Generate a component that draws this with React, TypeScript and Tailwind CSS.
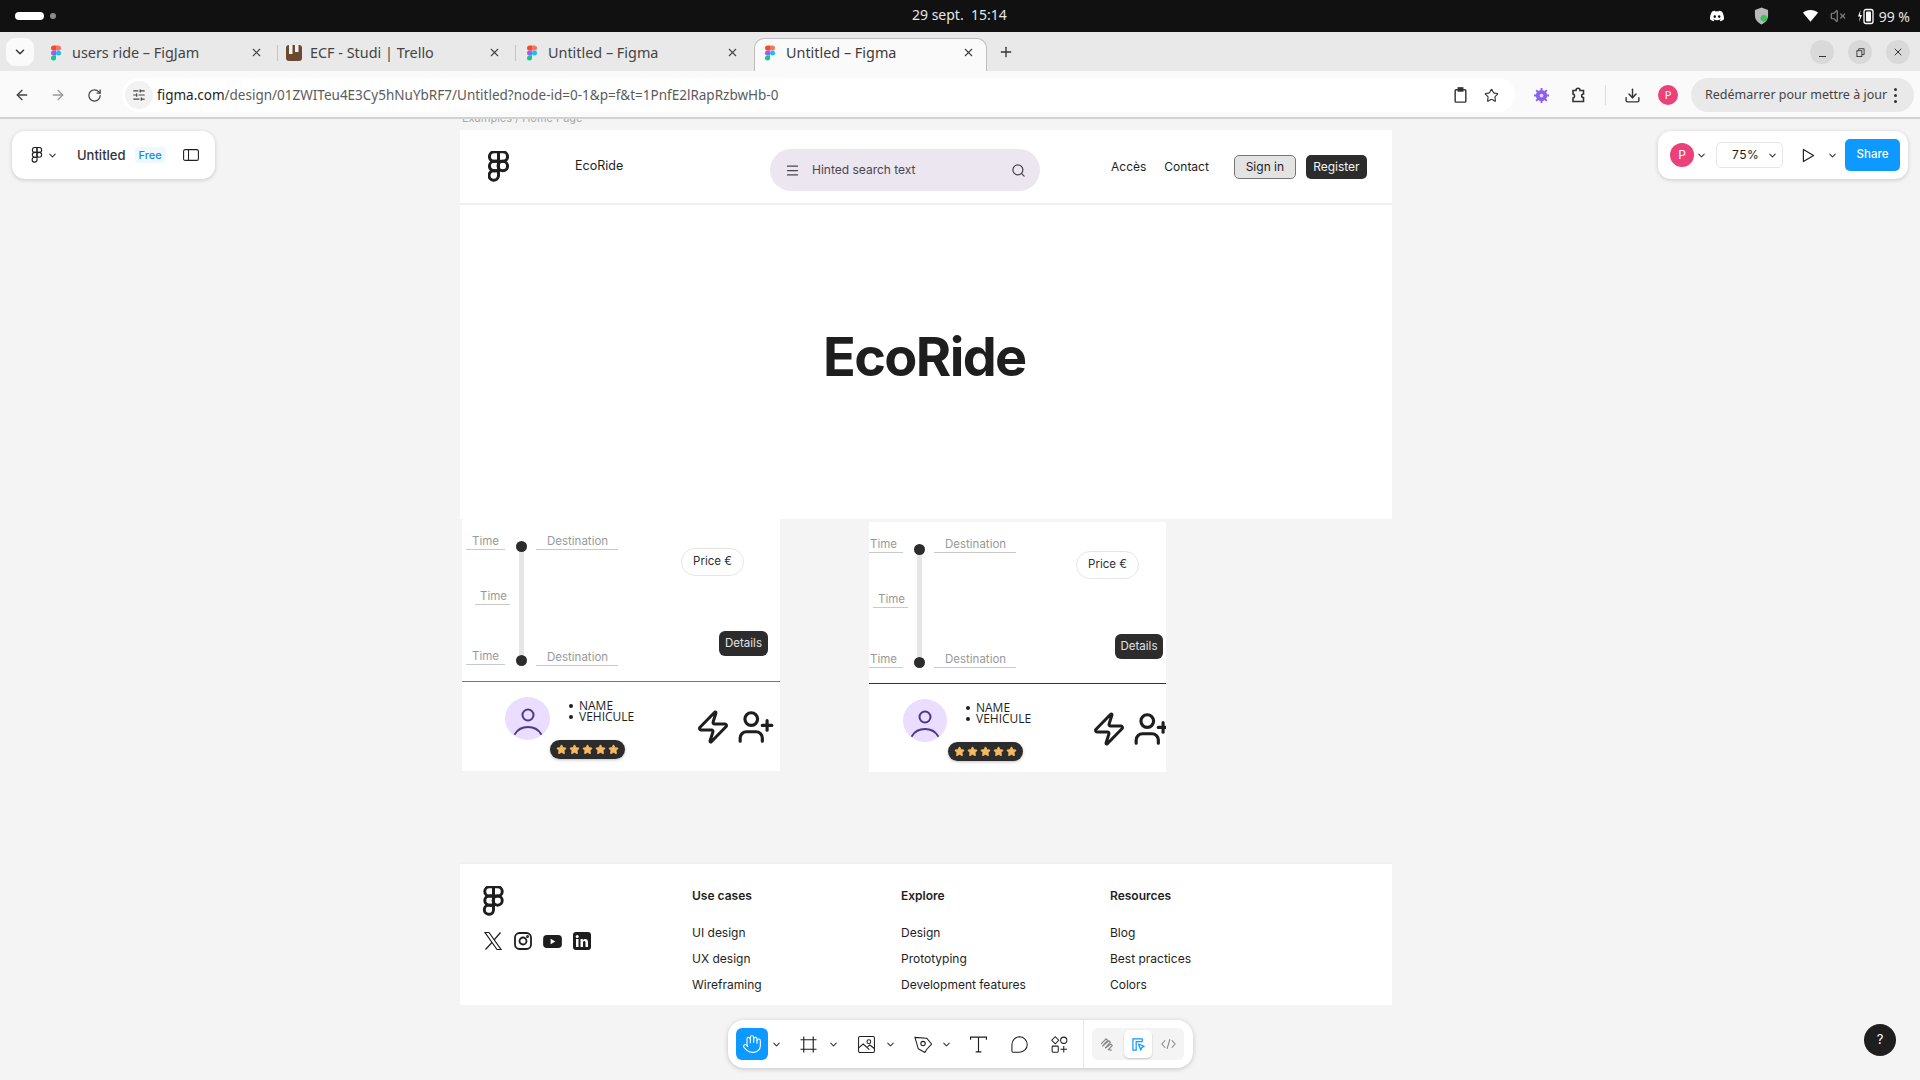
import { ArrowLeft, ArrowRight, ChevronDown, Download, Hand, Menu, Plus, RotateCw, Search, SlidersHorizontal, Star, UserPlus, VolumeX, X, Zap } from 'lucide-react'

const chromeFont = "font-['Noto_Sans',sans-serif]"

function FigmaLogo({ className, stroke = 3 }: { className: string; stroke?: number }) {
  return (
    <svg viewBox="0 0 24 36" fill="none" stroke="currentColor" strokeWidth={stroke} className={className}>
      <path d="M12 1H7a5.5 5.5 0 0 0 0 11h5z" />
      <path d="M12 1h5a5.5 5.5 0 0 1 0 11h-5z" />
      <path d="M12 12H7a5.5 5.5 0 0 0 0 11h5z" />
      <circle cx="17" cy="17.5" r="5.5" />
      <path d="M7 23h5v6a5.5 5.5 0 1 1-5-6z" />
    </svg>
  )
}

function FigmaFavicon() {
  return (
    <svg viewBox="0 0 24 36" className="w-[10px] h-[16px] shrink-0">
      <path d="M12 0H6a6 6 0 0 0 0 12h6z" fill="#f24e1e" />
      <path d="M12 0h6a6 6 0 0 1 0 12h-6z" fill="#ff7262" />
      <path d="M12 12H6a6 6 0 0 0 0 12h6z" fill="#a259ff" />
      <circle cx="18" cy="18" r="6" fill="#1abcfe" />
      <path d="M6 24h6v6a6 6 0 1 1-6-6z" fill="#0acf83" />
    </svg>
  )
}

function TrelloFavicon() {
  return (
    <svg viewBox="0 0 16 16" className="w-[16px] h-[16px] shrink-0">
      <rect x="0" y="0" width="16" height="16" rx="3" fill="#6b4a32" />
      <rect x="3" y="0" width="3.5" height="9" fill="#f2f2f2" />
      <rect x="9" y="0" width="3.5" height="7" fill="#f2f2f2" />
    </svg>
  )
}

function Tab({ title, active, icon }: { title: string; active?: boolean; icon: React.ReactNode }) {
  return (
    <div className={active ? 'w-[233px] h-[33px] flex items-center pl-[7px] pr-[11px] pb-[5px] gap-[8px] bg-[#fafafa] border border-b-0 border-[#bdbdbd] rounded-t-[10px] text-[#3c3c3c]' : 'w-[238px] h-[33px] flex items-center pl-[8px] pr-[15px] pb-[4px] gap-[8px] text-[#444]'}>
      <span className="w-[16px] flex justify-center">{icon}</span>
      <span className="flex-1 text-[14.4px] truncate">{title}</span>
      <X size={13} strokeWidth={2} />
    </div>
  )
}

function TopBar() {
  return (
    <div className={`${chromeFont} h-[32px] bg-[#111111] flex items-center justify-between pl-[15px] pr-[10px] relative`}>
      <div className="flex items-center gap-[6px]">
        <div className="w-[29px] h-[8px] rounded-full bg-white" />
        <div className="w-[6px] h-[6px] rounded-full bg-[#8a8a8a]" />
      </div>
      <div className="absolute left-[912px] top-[4px] leading-[22px] text-[14px] text-[#e6e6e6] whitespace-pre">29 sept.  15:14</div>
      <div className="flex items-center text-white">
        <svg viewBox="0 0 24 24" className="w-[16px] h-[16px]" fill="currentColor">
          <path d="M19.3 5.3A17 17 0 0 0 15 4l-.6 1.2a16 16 0 0 0-4.8 0L9 4a17 17 0 0 0-4.3 1.3C2 9.4 1.2 13.400 1.600 17.300A17 17 0 0 0 6.800 20l1.100-1.800-1.700-.9.400-.3a12 12 0 0 0 10.800 0l.4.300-1.700.9 1.100 1.800a17 17 0 0 0 5.200-2.700c.5-4.500-.8-8.500-3.100-12zM8.700 14.900c-1 0-1.900-1-1.900-2.100s.8-2.100 1.900-2.100 1.900 1 1.900 2.100-.8 2.100-1.900 2.100zm6.600 0c-1 0-1.900-1-1.900-2.100s.8-2.100 1.900-2.100 1.900 1 1.900 2.100-.8 2.100-1.900 2.100z" />
        </svg>
        <svg viewBox="0 0 16 18" className="w-[15px] h-[18px] ml-[29px]">
          <path d="M8 0l7 2.500v6c0 4.500-3 7.500-7 9.500-4-2-7-5-7-9.500v-6z" fill="#b8b8b8" />
          <circle cx="10.500" cy="11.500" r="3.500" fill="#3ac35a" />
        </svg>
        <svg viewBox="0 0 16 14" className="w-[15px] h-[14px] ml-[34px]" fill="currentColor">
          <path d="M8 13L0 3.500C2 1.500 5 .5 8 .5s6 1 8 3z" />
        </svg>
        <VolumeX size={16} className="ml-[12px] text-[#777]" />
        <svg viewBox="0 0 18 18" className="w-[18px] h-[18px] ml-[11px]" fill="none">
          <path d="M3.500 3L1 9.500h2L2 15l3-7H3z" fill="white" />
          <rect x="7" y="2.500" width="9" height="14" rx="2" stroke="white" strokeWidth="1.300" />
          <rect x="9" y="4.500" width="5" height="10" rx="1" fill="white" />
        </svg>
        <span className="ml-[4px] text-[14px] text-[#e6e6e6] whitespace-nowrap">99 %</span>
      </div>
    </div>
  )
}

function TabStrip() {
  return (
    <div className={`${chromeFont} h-[39px] bg-[#e9e9e9] flex items-end pl-[6px]`}>
      <div className="w-[28px] h-[28px] mb-[5px] mr-[6px] rounded-[9px] bg-[#fafafa] flex items-center justify-center">
        <ChevronDown size={14} strokeWidth={2.5} className="text-[#333]" />
      </div>
      <Tab title="users ride – FigJam" icon={<FigmaFavicon />} />
      <div className="w-px h-[16px] bg-[#c4c4c4] mb-[10px] -ml-px" />
      <Tab title="ECF - Studi | Trello" icon={<TrelloFavicon />} />
      <div className="w-px h-[16px] bg-[#c4c4c4] mb-[10px] -ml-px" />
      <Tab title="Untitled – Figma" icon={<FigmaFavicon />} />
      <Tab title="Untitled – Figma" active icon={<FigmaFavicon />} />
      <Plus size={16} strokeWidth={2} className="ml-[11px] mb-[11px] text-[#333]" />
      <div className="ml-auto mr-[10px] mb-[7px] flex gap-[14px] text-[#333]">
        <div className="w-[24px] h-[24px] rounded-full bg-[#d9d9d9] flex items-end justify-center pb-[7px]">
          <div className="w-[7px] h-px bg-[#333]" />
        </div>
        <div className="w-[24px] h-[24px] rounded-full bg-[#d9d9d9] flex items-center justify-center">
          <svg viewBox="0 0 10 10" className="w-[9px] h-[9px]" fill="none" stroke="#333">
            <rect x="1" y="3" width="5.500" height="6.500" />
            <path d="M3 3V.8h6v6.500H6.500" />
          </svg>
        </div>
        <div className="w-[24px] h-[24px] rounded-full bg-[#d9d9d9] flex items-center justify-center">
          <X size={12} strokeWidth={2} />
        </div>
      </div>
    </div>
  )
}

function AddressBar() {
  return (
    <div className={`${chromeFont} h-[48px] bg-[#fafafa] border-b-2 border-[#d2d2d2] flex items-center pt-[2px] text-[#444]`}>
      <ArrowLeft size={16} strokeWidth={2} className="ml-[14px]" />
      <ArrowRight size={16} strokeWidth={2} className="ml-[20px] text-[#999]" />
      <RotateCw size={15} strokeWidth={2} className="ml-[21px]" />
      <div className="ml-[20px] w-[1393px] h-[34px] rounded-full bg-white flex items-center">
        <div className="w-[28px] h-[28px] ml-[3px] rounded-full bg-[#f2f2f2] flex items-center justify-center">
          <SlidersHorizontal size={14} strokeWidth={2} />
        </div>
        <div className="ml-[4px] text-[13.5px] text-[#5b5b5b] whitespace-nowrap">
          <span className="text-[#1f1f1f]">figma.com</span>/design/01ZWITeu4E3Cy5hNuYbRF7/Untitled?node-id=0-1&p=f&t=1PnfE2lRapRzbwHb-0
        </div>
        <svg viewBox="0 0 14 18" className="ml-auto w-[13px] h-[16px]" fill="none" stroke="#333" strokeWidth="1.600">
          <rect x="1" y="3" width="12" height="14" rx="1" />
          <rect x="4.500" y="1" width="5" height="3.500" fill="#333" />
        </svg>
        <Star size={15} strokeWidth={1.800} className="ml-[17px] mr-[16px] text-[#333]" />
      </div>
      <svg viewBox="0 0 16 16" className="ml-[19px] w-[15px] h-[15px]">
        <circle cx="8" cy="8" r="6" fill="#8b5cf6" />
        <path d="M8 0v16M0 8h16M2.300 2.300l11.400 11.400M13.700 2.300L2.300 13.700" stroke="#8b5cf6" strokeWidth="2" />
        <circle cx="8" cy="8" r="2" fill="#ddd" />
      </svg>
      <svg viewBox="0 0 16 16" className="ml-[21px] w-[16px] h-[16px]" fill="none" stroke="#333" strokeWidth="1.600">
        <path d="M3 3.500h3c0-3 4-3 4 0h3.500v3.500c-2.500 0-2.500 3.500 0 3.500V14.500H3v-3.500c2 0 2-4 0-4z" />
      </svg>
      <div className="ml-[19px] w-px h-[20px] bg-[#dcdcdc]" />
      <Download size={17} strokeWidth={2} className="ml-[18px] text-[#333]" />
      <div className="ml-[17px] w-[20px] h-[20px] rounded-full bg-[#ec407a] text-white text-[11px] flex items-center justify-center">P</div>
      <div className="ml-[13px] w-[223px] h-[34px] rounded-full bg-[#e9e9e9] flex items-center pl-[14px] text-[12.5px] text-[#444] whitespace-nowrap">
        Redémarrer pour mettre à jour
        <div className="ml-[7px] flex flex-col gap-[3px]">
          <div className="w-[3px] h-[3px] rounded-full bg-[#333]" />
          <div className="w-[3px] h-[3px] rounded-full bg-[#333]" />
          <div className="w-[3px] h-[3px] rounded-full bg-[#333]" />
        </div>
      </div>
    </div>
  )
}

function PageNav() {
  return (
    <div className="h-[75px] bg-white border-b-2 border-[#efefef] flex items-center text-[#1e1e1e]">
      <FigmaLogo className="w-[21px] h-[31px] ml-[28px]" stroke={3.500} />
      <div className="ml-[66px] w-[195px] text-[12.5px]">EcoRide</div>
      <div className="h-[42px] w-[270px] mt-[7px] rounded-full bg-[#ece6f0] flex items-center pl-[15px] pr-[14px] text-[#49454f]">
        <Menu size={15} strokeWidth={2} />
        <span className="ml-[12px] text-[12px] flex-1">Hinted search text</span>
        <Search size={15} strokeWidth={2} />
      </div>
      <span className="ml-[71px] text-[12px]">Accès</span>
      <span className="ml-[18px] text-[12px]">Contact</span>
      <div className="ml-[25px] w-[62px] h-[24px] rounded-[5px] bg-[#e3e3e3] border border-[#767676] flex items-center justify-center text-[12px]">Sign in</div>
      <div className="ml-[10px] w-[61px] h-[24px] rounded-[5px] bg-[#2c2c2c] flex items-center justify-center text-[12px] text-[#f5f5f5]">Register</div>
    </div>
  )
}

function Label({ text, className }: { text: string; className: string }) {
  return <div className={`border-b border-[#c9c9c9] text-[11.5px] leading-[16px] text-[#999] ${className}`}>{text}</div>
}

// cards are the same figma component, the second one is cropped and its content sits a bit to the left
function RideCard({ wrapClass, topClass, railClass, leftClass, rightClass, avatarClass, detailsClass, dividerClass }: {
  wrapClass: string
  topClass: string
  railClass: string
  leftClass: string
  rightClass: string
  avatarClass: string
  detailsClass: string
  dividerClass: string
}) {
  return (
    <div className={`bg-white overflow-hidden flex flex-col ${wrapClass}`}>
      <div className={`flex ${topClass}`}>
        <div className="w-[44px] shrink-0 pt-[14px] flex flex-col">
          <Label text="Time" className="w-[39px] pl-[6px]" />
          <Label text="Time" className="mt-[38px] ml-[9px] pl-[5px]" />
          <Label text="Time" className="mt-[43px] w-[39px] pl-[6px]" />
        </div>
        <div className={`w-[11px] shrink-0 ml-[6px] pt-[22px] flex flex-col items-center ${railClass}`}>
          <div className="w-[11px] h-[11px] rounded-full bg-[#2c2c2c]" />
          <div className="w-[5px] flex-1 bg-[#e6e6e6]" />
          <div className="w-[11px] h-[11px] rounded-full bg-[#2c2c2c]" />
        </div>
        <div className={`w-[82px] shrink-0 ml-[9px] pt-[14px] flex flex-col ${railClass}`}>
          <Label text="Destination" className="pl-[11px]" />
          <Label text="Destination" className="mt-auto pl-[11px]" />
        </div>
        <div className={`w-[87px] ml-auto flex flex-col shrink-0 ${rightClass}`}>
          <div className="mt-[29px] w-[63px] h-[28px] rounded-full border border-[#e6e6e6] flex items-center justify-center text-[11.5px] text-[#303030]">Price €</div>
          <div className={`mt-[55px] self-end h-[25px] rounded-[6px] bg-[#2c2c2c] flex items-center justify-center text-[11.5px] text-[#e3e3e3] ${detailsClass}`}>Details</div>
        </div>
      </div>
      <div className={`h-px shrink-0 ${dividerClass}`} />
      <div className="flex flex-1">
        <div className={`shrink-0 pt-[15px] ${leftClass}`}>
          <div className="flex">
            <div className={`h-[43px] rounded-[50%] bg-[#eaddff] overflow-hidden flex justify-center ${avatarClass}`}>
              <svg viewBox="0 0 32 32" className="w-[32px] h-[38px] mt-[8px] text-[#4f378a]" fill="none" stroke="currentColor" strokeWidth="2">
                <circle cx="16" cy="7" r="5.500" />
                <path d="M3 26c3-5 8-7 13-7s10 2 13 7" strokeLinecap="round" />
              </svg>
            </div>
            <ul className="ml-[19px] pt-[3px] text-[12px] leading-[11px] text-[#1e1e1e] font-['Open_Sans',sans-serif]">
              <li className="flex items-center gap-[6px]"><span className="w-[4px] h-[4px] rounded-full bg-[#1e1e1e]" />NAME</li>
              <li className="flex items-center gap-[6px]"><span className="w-[4px] h-[4px] rounded-full bg-[#1e1e1e]" />VEHICULE</li>
            </ul>
          </div>
          <div className="ml-[45px] w-[75px] h-[19px] rounded-full bg-[#2c2c2c] shadow-[0_1px_3px_rgba(0,0,0,0.25)] flex items-center justify-center gap-[2px]">
            {[0, 1, 2, 3, 4].map(i => (
              <Star key={i} size={11} fill="#f6b95f" stroke="#f6b95f" />
            ))}
          </div>
        </div>
        <div className="shrink-0 pt-[27px] flex text-[#1e1e1e]">
          <Zap size={36} strokeWidth={2} className="shrink-0 -ml-px" />
          <UserPlus size={38} strokeWidth={2} className="ml-[6px] -mt-px shrink-0" />
        </div>
      </div>
    </div>
  )
}

function FooterCol({ title, items, className }: { title: string; items: string[]; className: string }) {
  return (
    <div className={className}>
      <div className="text-[12px] leading-[16px] font-semibold text-[#1e1e1e]">{title}</div>
      <div className="mt-[21px] flex flex-col gap-[10px] text-[12px] leading-[16px] text-[#1e1e1e]">
        {items.map(item => <div key={item}>{item}</div>)}
      </div>
    </div>
  )
}

function PageFooter() {
  return (
    <div className="h-[143px] bg-white border-t-2 border-[#efefef] flex">
      <div className="w-[209px] pl-[23px] pt-[22px] shrink-0 text-[#1e1e1e]">
        <FigmaLogo className="w-[21px] h-[30px]" stroke={3.500} />
        <div className="mt-[15px] flex items-center gap-[11px]">
          <svg viewBox="0 0 20 20" className="w-[20px] h-[20px]" fill="none" stroke="currentColor" strokeWidth="1.200">
            <path d="M2 1.500h4l12 17h-4zM17.500 1.500L11 9M9 11.500l-6.500 7" />
          </svg>
          <svg viewBox="0 0 18 18" className="w-[18px] h-[18px]" fill="none" stroke="currentColor" strokeWidth="1.800">
            <rect x="1" y="1" width="16" height="16" rx="4.500" />
            <circle cx="9" cy="9" r="3.500" />
            <circle cx="13.500" cy="4.500" r=".6" />
          </svg>
          <svg viewBox="0 0 20 16" className="w-[19px] h-[15px]">
            <rect x="0" y="1" width="20" height="14" rx="4" fill="currentColor" />
            <path d="M8 5l5 3-5 3z" fill="white" />
          </svg>
          <svg viewBox="0 0 18 18" className="w-[18px] h-[18px]">
            <rect width="18" height="18" rx="3" fill="currentColor" />
            <rect x="3" y="7" width="2.500" height="8" fill="white" />
            <circle cx="4.200" cy="4.500" r="1.500" fill="white" />
            <path d="M7.500 7h2.400v1.200c1.500-2 5.100-1.800 5.100 1.800v5h-2.500v-4.500c0-2-2.500-2-2.500 0V15H7.500z" fill="white" />
          </svg>
        </div>
      </div>
      <FooterCol title="Use cases" items={['UI design', 'UX design', 'Wireframing']} className="w-[209px] pt-[23.5px] ml-[23px]" />
      <FooterCol title="Explore" items={['Design', 'Prototyping', 'Development features']} className="w-[209px] pt-[23.5px]" />
      <FooterCol title="Resources" items={['Blog', 'Best practices', 'Colors']} className="w-[209px] pt-[23.5px]" />
    </div>
  )
}

function TinyChevron({ className = '' }: { className?: string }) {
  return <ChevronDown size={11} strokeWidth={2.200} className={`shrink-0 text-[#333] ${className}`} />
}

function LeftPanel() {
  return (
    <div className="absolute left-[12px] top-[12px] w-[203px] h-[48px] rounded-[13px] bg-white shadow-[0_1px_4px_rgba(0,0,0,0.18)] flex items-center pl-[19px] text-[#1e1e1e]">
      <FigmaLogo className="w-[12px] h-[16px]" stroke={2.500} />
      <TinyChevron className="ml-[4px]" />
      <span className="ml-[19px] mt-[1px] text-[13px] font-medium text-[#333]">Untitled</span>
      <span className="ml-[9px] h-[16px] w-[31px] rounded-[4px] bg-[#f0f7ff] text-[11px] leading-[16px] font-medium text-[#0d8ce0] text-center">Free</span>
      <svg viewBox="0 0 16 12" className="ml-[17px] w-[16px] h-[12px]" fill="none" stroke="#222" strokeWidth="1.100">
        <rect x=".6" y=".6" width="14.800" height="10.800" rx="1.500" />
        <path d="M5.500 .6v10.800" />
      </svg>
    </div>
  )
}

function RightPanel() {
  return (
    <div className="absolute left-[1658px] top-[12px] w-[250px] h-[48px] rounded-[13px] bg-white shadow-[0_1px_4px_rgba(0,0,0,0.18)] flex items-center pl-[12px] text-[#1e1e1e]">
      <div className="w-[24px] h-[24px] rounded-full bg-[#ec407a] text-white text-[12px] flex items-center justify-center">P</div>
      <TinyChevron className="ml-[2px]" />
      <div className="ml-[9px] w-[67px] h-[26px] rounded-[5px] border border-[#e6e6e6] flex items-center pl-[15px] text-[12px] tracking-[0.5px]">
        75%
        <TinyChevron className="ml-auto mr-[4px]" />
      </div>
      <svg viewBox="0 0 14 16" className="ml-[19px] w-[13px] h-[15px]" fill="none" stroke="#222" strokeWidth="1.300" strokeLinejoin="round">
        <path d="M1.500 1.500v13L12.500 8z" />
      </svg>
      <TinyChevron className="ml-[12px]" />
      <div className="ml-[7px] w-[55px] h-[32px] rounded-[5px] bg-[#0d99ff] text-white text-[11.5px] font-medium flex items-center justify-center">Share</div>
    </div>
  )
}

function BottomToolbar() {
  return (
    <div className="absolute left-[728px] top-[901px] w-[465px] h-[48px] rounded-[16px] bg-white shadow-[0_1px_5px_rgba(0,0,0,0.2)] flex items-center pl-[8px] text-[#1e1e1e]">
      <div className="w-[32px] h-[32px] shrink-0 rounded-[6px] bg-[#0d99ff] text-white flex items-center justify-center">
        <Hand size={20} strokeWidth={1.300} />
      </div>
      <TinyChevron className="ml-[2.5px]" />
      <svg viewBox="0 0 18 18" className="ml-[18px] w-[17px] h-[17px] shrink-0" fill="none" stroke="#1e1e1e" strokeWidth="1.200">
        <path d="M4 .5v17M14 .5v17M.5 4h17M.5 14h17" />
      </svg>
      <TinyChevron className="ml-[11px]" />
      <svg viewBox="0 0 18 18" className="ml-[19px] w-[17px] h-[17px] shrink-0" fill="none" stroke="#1e1e1e" strokeWidth="1.100">
        <rect x=".6" y=".6" width="16.800" height="16.800" rx="1.500" />
        <circle cx="11.500" cy="6" r="2" />
        <path d="M.6 12.500L5.500 8.500l6.500 6M10 11.500l2.500-2 5 4" />
      </svg>
      <TinyChevron className="ml-[10px]" />
      <svg viewBox="0 0 20 20" className="ml-[18px] w-[19px] h-[19px] shrink-0" fill="none" stroke="#1e1e1e" strokeWidth="1.100" strokeLinejoin="round">
        <path d="M1 2.500L13.500 3.500l5 6-5 5.500-2 3.500-7-4z" />
        <circle cx="9.500" cy="9" r="2.300" />
      </svg>
      <TinyChevron className="ml-[8px]" />
      <svg viewBox="0 0 18 18" className="ml-[18px] w-[17px] h-[17px] shrink-0" fill="none" stroke="#1e1e1e" strokeWidth="1.200">
        <path d="M.6 4V1.200h16.800V4M9 1.200v15.600M6 16.800h6" />
      </svg>
      <svg viewBox="0 0 18 18" className="ml-[24px] w-[17px] h-[17px] shrink-0" fill="none" stroke="#1e1e1e" strokeWidth="1.100">
        <path d="M9 .8a8.200 8.200 0 0 1 0 16.400H2a1 1 0 0 1-1-1V9A8.200 8.200 0 0 1 9 .8z" />
      </svg>
      <svg viewBox="0 0 18 18" className="ml-[23px] w-[17px] h-[17px] shrink-0" fill="none" stroke="#1e1e1e" strokeWidth="1.100">
        <path d="M4.500 .8l3.700 3.700-3.700 3.700L.8 4.500z" />
        <circle cx="13.500" cy="4.500" r="3.300" />
        <rect x="1.200" y="10.700" width="6.500" height="6.500" rx="1" />
        <path d="M13.500 10.500v7M10 14h7" />
      </svg>
      <div className="ml-[15.5px] w-px h-[48px] shrink-0 bg-[#e6e6e6]" />
      <div className="ml-[8px] w-[92px] h-[32px] shrink-0 rounded-[6px] bg-[#f4f4f4] flex items-center pl-[8px]">
        <svg viewBox="0 0 16 16" className="w-[15px] h-[15px]" fill="none" stroke="#8a8a8a" strokeWidth="1.300" strokeLinecap="round">
          <path d="M1.500 7L6.500 2 8 3.500 2.500 10 9.500 4l1.500 1.500L5.500 12l6-4.500 1.500 1.500-4 4.500 3 .5" />
        </svg>
        <div className="ml-[9px] w-[28px] h-[28px] rounded-[5px] bg-white shadow-[0_1px_2px_rgba(0,0,0,0.2)] flex items-center justify-center">
          <svg viewBox="0 0 14 14" className="w-[13px] h-[13px]" fill="none" stroke="#0d99ff" strokeWidth="1.300">
            <path d="M1 1h10v3H4.500v9H1zM4.500 4v0" />
            <path d="M7 6.500l6 2.500-2.500 1.200L9.500 13z" strokeLinejoin="round" />
          </svg>
        </div>
        <svg viewBox="0 0 16 12" className="ml-[9px] w-[15px] h-[12px]" fill="none" stroke="#8a8a8a" strokeWidth="1.200">
          <path d="M4.500 2L1 6l3.500 4M11.500 2L15 6l-3.500 4M9.500 .8L6.500 11.200" />
        </svg>
      </div>
    </div>
  )
}

export default function App() {
  return (
    <div className="w-[1920px] h-[1080px] overflow-hidden flex flex-col bg-[#f4f4f4] font-['Inter',sans-serif]">
      <TopBar />
      <TabStrip />
      <AddressBar />
      <div className="relative flex-1 overflow-hidden">
        <div className="ml-[460px] w-[932px]">
          <div className="h-[11px] overflow-hidden">
            <div className="-mt-[7px] ml-[2px] text-[11px] leading-[13px] text-[#a8a8a8]">Examples / Home Page</div>
          </div>
          <PageNav />
          <div className="h-[314px] bg-white flex items-center">
            <h1 className="ml-[363px] mb-[11px] text-[54px] font-bold tracking-[-0.03em] text-[#1e1e1e]">EcoRide</h1>
          </div>
          <div className="h-[343px] flex items-start">
            <RideCard
              wrapClass="ml-[2px] w-[318px] h-[252px]"
              topClass="h-[162px] pl-[4px]"
              railClass="h-[147px]"
              leftClass="ml-[43px] w-[191px]"
              rightClass="mr-[12px]"
              avatarClass="w-[45px]"
              detailsClass="w-[49px]"
              dividerClass="bg-[#777777]"
            />
            <RideCard
              wrapClass="ml-[89px] mt-[3px] w-[297px] h-[250px]"
              topClass="h-[161px] -ml-[5px]"
              railClass="h-[146px]"
              leftClass="ml-[34px] w-[189px]"
              rightClass="mr-[3px]"
              avatarClass="w-[44px]"
              detailsClass="w-[48px]"
              dividerClass="bg-[#333333]"
            />
          </div>
          <PageFooter />
        </div>
        <LeftPanel />
        <RightPanel />
        <BottomToolbar />
        <div className="absolute left-[1864px] top-[905px] w-[32px] h-[32px] rounded-full bg-[#1e1e1e] text-white text-[13px] flex items-center justify-center">?</div>
      </div>
    </div>
  )
}
